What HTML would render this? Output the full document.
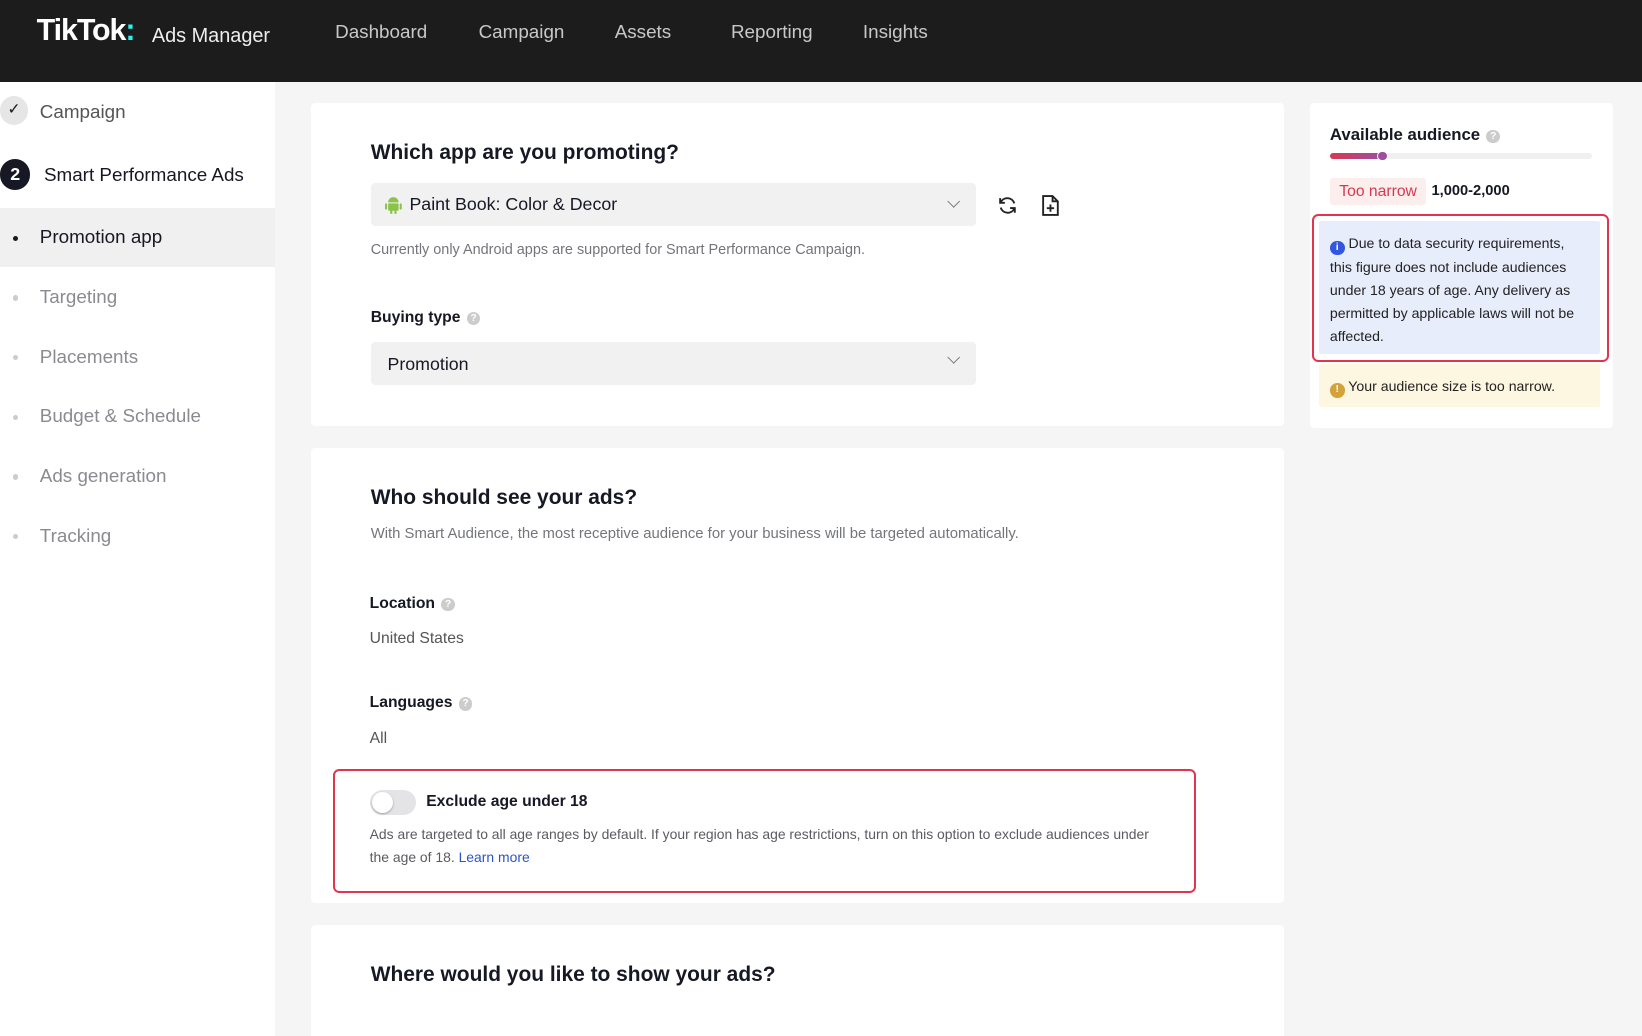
<!DOCTYPE html><html><head><style>
html,body{margin:0;padding:0;overflow:hidden}
body{width:1568px;height:989px;zoom:1.04719;background:#f5f5f5;font-family:"Liberation Sans",Arial,sans-serif;color:#161823;position:relative}
.a{position:absolute}
.top{left:0;top:0;width:1568px;height:78px;background:#1c1c1c}
.nav{top:20px;font-size:18px;color:#c8c8c8}
.side{left:0;top:78px;width:263px;height:911px;background:#fff}
.si{left:38px;font-size:18px;color:#8a8b91}
.dot{left:12px;width:5px;height:5px;border-radius:50%;background:#ccc}
.card{background:#fff;border-radius:4px}
.h{font-size:20px;font-weight:bold;color:#161823}
.lbl{font-size:15px;font-weight:bold}
.q{display:inline-block;width:13px;height:13px;border-radius:50%;background:#ccc;color:#fff;font-size:10px;text-align:center;line-height:13px;vertical-align:1px;margin-left:6px;font-weight:bold}
.sel{background:#f1f1f2;border-radius:4px;height:41px}
.small{font-size:13.8px;color:#73757b}
.chev{width:8px;height:8px;border-right:1.5px solid #777;border-bottom:1.5px solid #777;transform:rotate(45deg)}
</style></head><body>
<div class="a top"></div>
<div class="a" style="left:35px;top:13px;font-size:29px;font-weight:bold;color:#fff;letter-spacing:-1px">TikTok<span style="color:#25f4ee">:</span></div>
<div class="a" style="left:145px;top:24px;font-size:19px;color:#eee">Ads Manager</div>
<div class="a nav" style="left:320px">Dashboard</div>
<div class="a nav" style="left:457px">Campaign</div>
<div class="a nav" style="left:587px">Assets</div>
<div class="a nav" style="left:698px">Reporting</div>
<div class="a nav" style="left:824px">Insights</div>

<div class="a side"></div>
<div class="a" style="left:0;top:92px;width:27px;height:27px;border-radius:50%;background:#e6e6e6;text-align:center;line-height:27px;font-size:15px">✓</div>
<div class="a si" style="top:96px;color:#555">Campaign</div>
<div class="a" style="left:0;top:152px;width:29px;height:29px;border-radius:50%;background:#161823;color:#fff;text-align:center;line-height:29px;font-size:17px;font-weight:bold">2</div>
<div class="a si" style="left:42px;top:157px;color:#161823">Smart Performance Ads</div>
<div class="a" style="left:0;top:199px;width:263px;height:56px;background:#f0f0f0"></div>
<div class="a dot" style="top:225px;background:#161823"></div>
<div class="a si" style="top:216px;color:#161823">Promotion app</div>
<div class="a dot" style="top:282px"></div><div class="a si" style="top:273px">Targeting</div>
<div class="a dot" style="top:339px"></div><div class="a si" style="top:330px">Placements</div>
<div class="a dot" style="top:396px"></div><div class="a si" style="top:387px">Budget &amp; Schedule</div>
<div class="a dot" style="top:453px"></div><div class="a si" style="top:444px">Ads generation</div>
<div class="a dot" style="top:510px"></div><div class="a si" style="top:501px">Tracking</div>

<div class="a card" style="left:297px;top:98px;width:929px;height:309px"></div>
<div class="a h" style="left:354px;top:135px">Which app are you promoting?</div>
<div class="a sel" style="left:354px;top:175px;width:578px"></div>
<svg class="a" style="left:368px;top:186px" width="16" height="18" viewBox="0 0 16 18"><path d="M3 7a5 5 0 0 1 10 0z" fill="#8bc34a"/><rect x="3" y="8" width="10" height="7" rx="1" fill="#8bc34a"/><rect x="0" y="8" width="2" height="6" rx="1" fill="#8bc34a"/><rect x="14" y="8" width="2" height="6" rx="1" fill="#8bc34a"/><rect x="5" y="14" width="2" height="4" fill="#8bc34a"/><rect x="9" y="14" width="2" height="4" fill="#8bc34a"/></svg>
<div class="a" style="left:391px;top:185px;font-size:17px">Paint Book: Color &amp; Decor</div>
<div class="a chev" style="left:906px;top:188px"></div>
<svg class="a" style="left:952px;top:186px" width="20" height="20" viewBox="0 0 20 20" fill="none" stroke="#222" stroke-width="1.8"><path d="M16.5 8A7 7 0 0 0 3.5 7M3.5 12a7 7 0 0 0 13 1"/><path d="M3 3v4.5h4.5M17 17v-4.5h-4.5"/></svg>
<svg class="a" style="left:993px;top:185px" width="20" height="22" viewBox="0 0 20 22" fill="none" stroke="#222" stroke-width="1.8"><path d="M12 2H3v18h14V7z M12 2v5h5"/><path d="M10 10v7M6.5 13.5h7"/></svg>
<div class="a small" style="left:354px;top:231px">Currently only Android apps are supported for Smart Performance Campaign.</div>
<div class="a lbl" style="left:354px;top:295px">Buying type<span class="q">?</span></div>
<div class="a sel" style="left:354px;top:327px;width:578px"></div>
<div class="a" style="left:370px;top:338px;font-size:17px">Promotion</div>
<div class="a chev" style="left:906px;top:337px"></div>

<div class="a card" style="left:297px;top:428px;width:929px;height:434px"></div>
<div class="a h" style="left:354px;top:464px">Who should see your ads?</div>
<div class="a small" style="left:354px;top:502px;font-size:14.2px">With Smart Audience, the most receptive audience for your business will be targeted automatically.</div>
<div class="a lbl" style="left:353px;top:568px">Location<span class="q">?</span></div>
<div class="a" style="left:353px;top:602px;font-size:15px;color:#555">United States</div>
<div class="a lbl" style="left:353px;top:663px">Languages<span class="q">?</span></div>
<div class="a" style="left:353px;top:697px;font-size:15px;color:#555">All</div>
<div class="a" style="left:318px;top:734px;width:820px;height:115px;border:2.5px solid #e2334f;border-radius:6px"></div>
<div class="a" style="left:353px;top:754px;width:44px;height:24px;border-radius:12px;background:#e4e4e6"></div>
<div class="a" style="left:355px;top:756px;width:20px;height:20px;border-radius:50%;background:#fff;box-shadow:0 1px 2px rgba(0,0,0,.3)"></div>
<div class="a lbl" style="left:407px;top:757px">Exclude age under 18</div>
<div class="a small" style="left:353px;top:786px;width:755px;line-height:22px;color:#5a5b60;font-size:13.3px">Ads are targeted to all age ranges by default. If your region has age restrictions, turn on this option to exclude audiences under the age of 18. <span style="color:#2a55c8">Learn more</span></div>

<div class="a card" style="left:297px;top:883px;width:929px;height:120px"></div>
<div class="a h" style="left:354px;top:920px">Where would you like to show your ads?</div>

<div class="a card" style="left:1251px;top:98px;width:289px;height:311px"></div>
<div class="a lbl" style="left:1270px;top:119px;font-size:16px">Available audience<span class="q">?</span></div>
<div class="a" style="left:1270px;top:146px;width:250px;height:6px;border-radius:3px;background:#f0f0f0"></div>
<div class="a" style="left:1270px;top:146px;width:48px;height:6px;border-radius:3px;background:linear-gradient(90deg,#d8384f,#a04da0)"></div>
<div class="a" style="left:1315px;top:144px;width:10px;height:10px;border-radius:50%;background:#a04da0;border:1px solid #fff;box-sizing:border-box"></div>
<div class="a" style="left:1270px;top:170px;width:92px;height:26px;background:#fdeeee;border-radius:3px;color:#d8384f;font-size:15px;line-height:26px;text-align:center">Too narrow</div>
<div class="a" style="left:1367px;top:175px;font-size:14px;font-weight:bold">1,000-2,000</div>
<div class="a" style="left:1253px;top:204px;width:280px;height:138px;border:2.5px solid #e2334f;border-radius:6px"></div>
<div class="a" style="left:1260px;top:211px;width:268px;height:127px;background:#e8edfb;border-radius:2px"></div>
<div class="a" style="left:1270px;top:222px;width:246px;font-size:13.5px;line-height:22px;color:#222"><span style="display:inline-block;width:14px;height:14px;border-radius:50%;background:#3355e0;color:#fff;font-size:10px;text-align:center;line-height:14px;font-weight:bold;vertical-align:-1px">i</span> Due to data security requirements, this figure does not include audiences under 18 years of age. Any delivery as permitted by applicable laws will not be affected.</div>
<div class="a" style="left:1260px;top:348px;width:268px;height:41px;background:#fdf6e0;border-radius:2px"></div>
<div class="a" style="left:1270px;top:361px;font-size:13.5px;color:#222"><span style="display:inline-block;width:14px;height:14px;border-radius:50%;background:#d4a23a;color:#fff;font-size:10px;text-align:center;line-height:14px;font-weight:bold;vertical-align:-1px">!</span> Your audience size is too narrow.</div>
</body></html>
